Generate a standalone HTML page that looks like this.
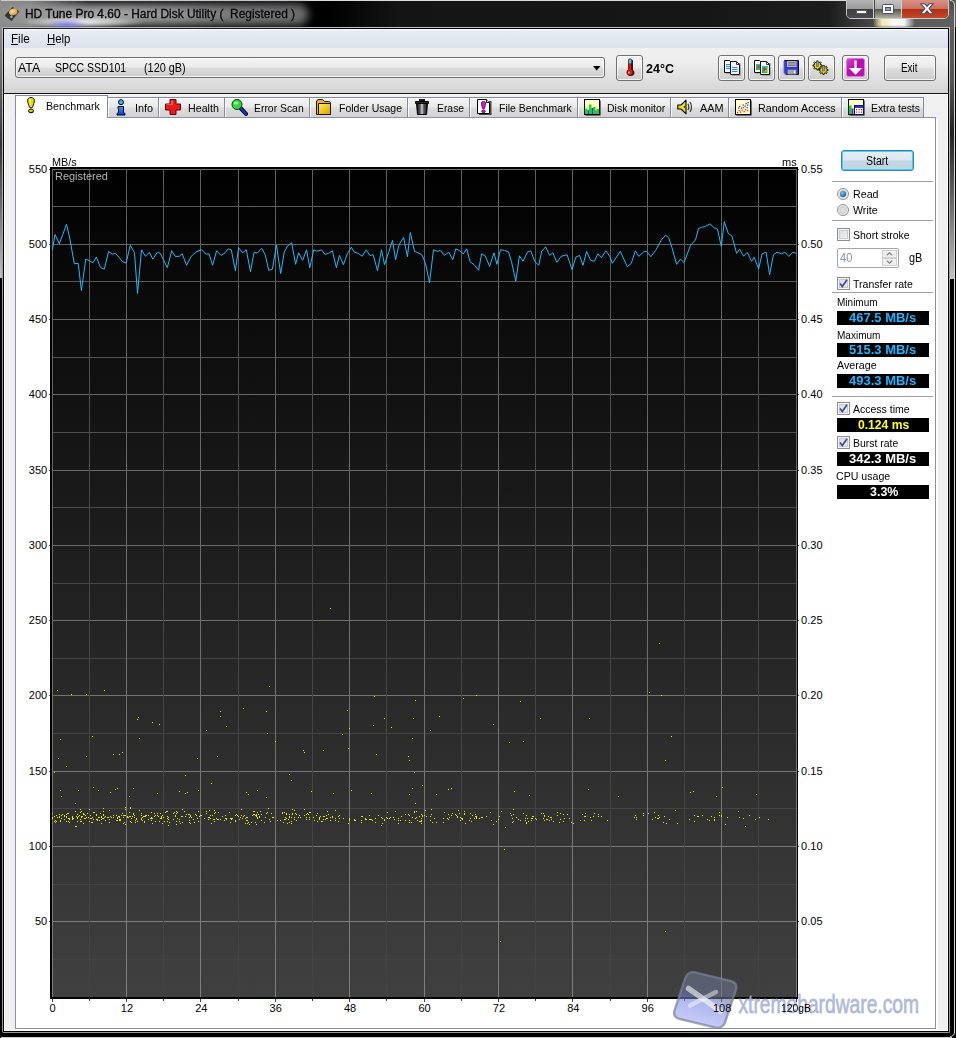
<!DOCTYPE html>
<html><head><meta charset="utf-8"><title>HD Tune Pro</title>
<style>

html,body{margin:0;padding:0}
body{width:956px;height:1038px;position:relative;overflow:hidden;background:#000;font-family:"Liberation Sans",sans-serif;font-size:11px;color:#000}
div,svg{position:absolute;box-sizing:border-box}
div{white-space:nowrap}
.ax{font-size:11px;line-height:14px;height:14px;z-index:6}
#client{left:4px;top:29px;width:946px;height:1002px;background:#f0f0f0}
#panel{left:15px;top:117px;width:921px;height:912px;background:#fff;border:1px solid #8c90a2;box-shadow:2px 2px 0 #fff}
.btn{border:1px solid #727272;border-radius:3px;background:linear-gradient(#f4f4f4 0,#ececec 46%,#dcdcdc 54%,#cdcdcd 100%);box-shadow:inset 0 0 0 1px rgba(255,255,255,.75)}
.tab{top:97px;height:20px;border:1px solid #858a9c;border-bottom:none;background:linear-gradient(#f3f3f3 0,#eaeaea 48%,#dddddd 52%,#d3d3d3 100%);box-shadow:inset 1px 1px 0 rgba(255,255,255,.85);font-size:11px;line-height:19px}
.tab span{position:absolute;top:0}
.tab svg{top:1px}
.sep{height:1px;background:#a0a0a0;left:832px;width:101px}
.lbl{font-size:11px;line-height:14px;height:14px}
.val{left:837px;width:92px;height:14px;background:#000;font-weight:bold;font-size:12px;line-height:14px;text-align:center;letter-spacing:.35px}
.cb{width:13px;height:13px;border:1px solid #8e8f8f;background:linear-gradient(135deg,#d8d8d8,#f6f6f6);box-shadow:inset 0 0 0 1px #f4f4f4, inset 0 0 0 2px #c8cbd0}
.rb{width:12px;height:12px;border:1px solid #8e8f8f;border-radius:50%;background:radial-gradient(circle at 50% 50%,#e8e8e8 0,#d0d0d0 45%,#f4f4f4 70%)}

</style></head>
<body>

<div style="left:0;top:0;width:956px;height:27px;background:linear-gradient(90deg,#000 0,#000 330px,#141414 400px,#161616 700px,#1c1c1c 830px,#464646 872px,#5c5c5c 915px,#5e5e5e 956px)"></div>
<div style="left:0;top:0;width:2px;height:278px;background:linear-gradient(#909090 0,#858a90 30px,#666 80px,#333 144px,#666 200px,#bbb 274px,#bbb 100%)"></div>
<div style="left:950px;top:0;width:4px;height:279px;background:linear-gradient(#4a4a4a 0,#606060 20px,#555 80px,#222 133px,#666 200px,#c0c0c0 277px,#c0c0c0 100%)"></div>
<div style="left:1px;top:0;width:846px;height:1px;background:#dcdcdc"></div>
<div style="left:1px;top:1037px;width:951px;height:1px;background:#d0d0d0"></div>
<div style="left:950px;top:10px;width:5px;height:1027px;border-right:1px solid #d4d4d4;border-bottom:1px solid #d0d0d0;border-radius:0 0 5px 0"></div>
<div style="left:950px;top:0px;width:5px;height:14px;border-right:1px solid #d4d4d4;border-top:1px solid #d0d0d0;border-radius:0 5px 0 0"></div>
<div style="left:2px;top:27px;width:948px;height:1006px;border:1px solid #9a9a9a;border-top-color:#c6c6c6;border-radius:2px"></div>
<div style="left:2px;top:27px;width:1px;height:300px;background:linear-gradient(#c6c6c6,#9a9a9a)"></div>
<div style="left:949px;top:27px;width:1px;height:300px;background:linear-gradient(#c6c6c6,#9a9a9a)"></div>
<div style="left:3px;top:28px;width:946px;height:1004px;background:#000"></div>
<div style="left:4px;top:29px;width:944px;height:1002px;background:#fff"></div>
<div id="client" style="left:5px;top:30px;width:942px;height:1000px"></div>


<div style="left:0;top:1px;width:90px;height:26px;background:linear-gradient(90deg,rgba(134,134,134,1) 0,rgba(140,140,140,.9) 30px,rgba(140,140,140,0) 90px)"></div>
<div style="left:-14px;top:4px;width:322px;height:21px;border-radius:9px;background:linear-gradient(90deg,#8c8c8c 0,#9c9c9c 60px,#a4a4a4 120px,#929292 190px,#7a7a7a 240px,#6c6c6c 100%);filter:blur(4.5px)"></div>
<div style="left:18px;top:15px;width:130px;height:13px;background:radial-gradient(ellipse 62px 6px at 50% 55%,rgba(255,255,255,.85) 0,rgba(255,255,255,.45) 55%,rgba(255,255,255,0) 100%)"></div>
<div style="left:44px;top:19px;width:46px;height:9px;background:radial-gradient(ellipse 22px 5px at 50% 60%,rgba(110,110,255,.75) 0,rgba(120,120,255,0) 100%)"></div>
<svg style="left:5px;top:6px" width="16" height="16" viewBox="0 0 16 16"><defs><radialGradient id="dg" cx=".45" cy=".4" r=".6"><stop offset="0" stop-color="#ffe0a0"/><stop offset=".5" stop-color="#f4b858"/><stop offset="1" stop-color="#d89838"/></radialGradient></defs><path d="M0 9 L7.500 1.100 L14.200 5.300 L6.700 14.500 Z" fill="#343434"/><path d="M0 9 L6.700 14.500 L6.700 15.300 L0 9.900Z" fill="#1c1c1c"/><path d="M6.700 14.500 L14.200 5.300 L14.200 6.100 L6.700 15.300Z" fill="#4a4a4a"/><ellipse cx="8.200" cy="5.900" rx="4.300" ry="3.300" fill="url(#dg)" transform="rotate(-20 8.200 5.900)"/><circle cx="8.200" cy="5.900" r="1.100" fill="#d4d4e4"/><rect x="5.200" y="9.800" width="2.300" height="2.200" fill="#a8a2a2" transform="rotate(-40 6.300 10.900)"/></svg>
<!-- window controls -->
<div style="left:846px;top:-1px;width:103px;height:20px;border:1px solid #c8c8c8;border-radius:0 0 5px 5px;overflow:hidden;background:#444">
  <div style="left:0;top:0;width:27px;height:18px;background:linear-gradient(#b4b4b4 0,#9a9a9a 48%,#3e3e42 52%,#4a4a50 100%);border-right:1px solid #d0d0d0"></div>
  <div style="left:28px;top:0;width:27px;height:18px;background:linear-gradient(#c4c4c4 0,#a8a8a8 48%,#55554c 52%,#b0b09c 100%);border-right:1px solid #d0d0d0"></div>
  <div style="left:55px;top:0;width:48px;height:18px;background:linear-gradient(#d99086 0,#c87262 48%,#b42c12 52%,#c24a2a 100%)"></div>
  <div style="left:9px;top:10px;width:11px;height:4px;background:#fff;border:1px solid #555a66;border-radius:1px"></div>
  <svg style="left:35px;top:4px" width="13" height="11" viewBox="0 0 13 11"><rect x=".5" y=".5" width="11" height="9" rx="1" fill="#fff" stroke="#4a5068"/><rect x="3.5" y="3.5" width="5" height="3" fill="#a8a690" stroke="#4a5068"/></svg>
  <svg style="left:73px;top:3px" width="14" height="12" viewBox="0 0 14 12"><path d="M1 .8 L4.800 .8 L7 3.400 L9.200 .8 L13 .8 L9.100 5.500 L13.200 10.700 L9.300 10.700 L7 7.800 L4.700 10.700 L.8 10.700 L4.900 5.500 Z" fill="#fff" stroke="#4a4f62" stroke-width="1.100"/></svg>
</div>
<div style="left:873px;top:19px;width:42px;height:8px;background:linear-gradient(90deg,rgba(240,232,176,0) 0,rgba(240,232,176,.55) 4px,rgba(242,234,180,1) 9px,rgba(246,242,210,1) 16px,rgba(250,250,250,1) 21px,rgba(248,248,248,1) 31px,rgba(240,240,240,.5) 37px,rgba(240,240,240,0) 42px)"></div>
<div style="left:873px;top:25px;width:42px;height:2px;background:linear-gradient(rgba(40,40,40,0),rgba(40,40,40,.35))"></div>


<div style="left:4px;top:29px;width:944px;height:19px;background:linear-gradient(#fff 0,#e6ebf4 2px,#dde3ee 100%)"></div>
<div style="left:10.500px;top:31px;font-size:12px;line-height:16px;transform-origin:0 0;transform:scaleX(.97)"><u>F</u>ile</div>
<div style="left:46.500px;top:31px;font-size:12px;line-height:16px;transform-origin:0 0;transform:scaleX(.95)"><u>H</u>elp</div>


<div style="left:4px;top:48px;width:944px;height:45px;background:linear-gradient(#f0f0f0 0,#eeeeee 30%,#dedede 75%,#d4d4d4 100%)"></div>
<div style="left:4px;top:93px;width:944px;height:1px;background:#111"></div>
<div style="left:4px;top:94px;width:944px;height:1px;background:#fafafa"></div>
<div class="btn" style="left:15px;top:57px;width:590px;height:21px;border-color:#707070"></div>
<svg style="left:593px;top:66px" width="8" height="5" viewBox="0 0 8 5"><path d="M0 0H7.500L3.750 4.500Z" fill="#000"/></svg>
<div class="btn" style="left:616px;top:55px;width:27px;height:26px"></div>
<svg style="left:623px;top:58px" width="14" height="20" viewBox="0 0 14 20"><path d="M6.500 2.500 C6.500 1 10 1 10 2.500 V12 C12.500 13.500 12 18 8 18 C4.500 18 4 13.500 6.500 12Z" fill="#000" opacity=".85"/><path d="M5.500 2 C5.500 .6 8.500 .6 8.500 2 V11.500 C11 13 10.500 17.500 7 17.500 C3.500 17.500 3 13 5.500 11.500Z" fill="#e81010" stroke="#500000" stroke-width=".8"/><rect x="5.800" y="1.500" width="2.600" height="3.800" fill="#38d8e8"/><circle cx="6" cy="14.500" r="1" fill="#ffb0b0"/></svg>
<div class="btn" style="left:718px;top:55px;width:27px;height:26px"></div>
<div class="btn" style="left:748px;top:55px;width:27px;height:26px"></div>
<div class="btn" style="left:778px;top:55px;width:27px;height:26px"></div>
<div class="btn" style="left:808px;top:55px;width:27px;height:26px"></div>
<div class="btn" style="left:842px;top:55px;width:27px;height:26px"></div>
<div class="btn" style="left:884px;top:55px;width:52px;height:26px"></div>
<svg style="left:724px;top:60px" width="17" height="16" viewBox="0 0 17 16"><rect x="1.5" y="1.5" width="7" height="12" fill="#303030" opacity=".5"/><path d="M.5 .5H5.500L7.500 2.500V12.500H.5Z" fill="#fff" stroke="#101010"/><path d="M2 4.500h4M2 6.500h4M2 8.500h4" stroke="#1a8cff" stroke-width="1.100"/><rect x="8" y="3" width="8.500" height="12.500" fill="#303030" opacity=".55"/><path d="M6.500 1.500H12.500L15.500 4.500V14.500H6.500Z" fill="#f4f4f4" stroke="#101010"/><path d="M12.500 1.500V4.500H15.500" fill="none" stroke="#101010" stroke-width=".8"/><path d="M8 7.500h5.500M8 9.500h5.500M8 11.500h5.500" stroke="#1a8cff" stroke-width="1.200"/></svg>
<svg style="left:754px;top:60px" width="17" height="16" viewBox="0 0 17 16"><rect x="1.5" y="1.5" width="7" height="12" fill="#303030" opacity=".5"/><path d="M.5 .5H5.500L7.500 2.500V12.500H.5Z" fill="#fff" stroke="#101010"/><rect x="2" y="4" width="4.500" height="6" fill="#28c048"/><rect x="2" y="4" width="4.500" height="1.200" fill="#30b0e8"/><rect x="3.500" y="5.500" width="2" height="2.500" fill="#e03020"/><rect x="8" y="3" width="8.500" height="12.500" fill="#303030" opacity=".55"/><path d="M6.500 1.500H12.500L15.500 4.500V14.500H6.500Z" fill="#f4f4f4" stroke="#101010"/><path d="M12.500 1.500V4.500H15.500" fill="none" stroke="#101010" stroke-width=".8"/><rect x="8" y="6" width="5.500" height="7" fill="#28c048"/><rect x="8" y="6" width="5.500" height="1.300" fill="#30b0e8"/><rect x="9.500" y="8" width="2.500" height="3" fill="#e03020"/><rect x="11" y="10" width="1.500" height="1.500" fill="#e8d020"/></svg>
<svg style="left:783px;top:60px" width="17" height="16" viewBox="0 0 17 16"><path d="M1.500 .5H15.500V14.500H3L1.500 13Z" fill="#3434d8" stroke="#0a0a30"/><path d="M1 1V13L3 15" fill="none" stroke="#8080f0" stroke-width="1.200"/><rect x="4" y="1" width="9.500" height="6" fill="#b8b8b8"/><path d="M5 2.500h7.500M5 4h7.500M5 5.500h7.500" stroke="#787878" stroke-width=".9"/><rect x="4.500" y="9.500" width="9" height="5" fill="#8c8c8c"/><rect x="10.500" y="10.500" width="2" height="3" fill="#e8e8e8"/><rect x="5" y="10" width="4.500" height="4" fill="#a8a8a8"/></svg>
<svg style="left:812px;top:59px" width="18" height="17" viewBox="0 0 18 17"><path d="M10.06 5.90 L10.06 7.10 L8.52 7.31 L8.21 8.06 L9.15 9.30 L8.30 10.15 L7.06 9.21 L6.31 9.52 L6.10 11.06 L4.90 11.06 L4.69 9.52 L3.94 9.21 L2.70 10.15 L1.85 9.30 L2.79 8.06 L2.48 7.31 L0.94 7.10 L0.94 5.90 L2.48 5.69 L2.79 4.94 L1.85 3.70 L2.70 2.85 L3.94 3.79 L4.69 3.48 L4.90 1.94 L6.10 1.94 L6.31 3.48 L7.06 3.79 L8.30 2.85 L9.15 3.70 L8.21 4.94 L8.52 5.69Z" fill="#e8e010" stroke="#1a1a00" stroke-width="1" stroke-linejoin="round"/><rect x="4.3" y="2.0" width="2.4" height="5.5" fill="#9a9aa0" stroke="#404048" stroke-width=".5"/><path d="M16.06 10.40 L16.06 11.60 L14.52 11.81 L14.21 12.56 L15.15 13.80 L14.30 14.65 L13.06 13.71 L12.31 14.02 L12.10 15.56 L10.90 15.56 L10.69 14.02 L9.94 13.71 L8.70 14.65 L7.85 13.80 L8.79 12.56 L8.48 11.81 L6.94 11.60 L6.94 10.40 L8.48 10.19 L8.79 9.44 L7.85 8.20 L8.70 7.35 L9.94 8.29 L10.69 7.98 L10.90 6.44 L12.10 6.44 L12.31 7.98 L13.06 8.29 L14.30 7.35 L15.15 8.20 L14.21 9.44 L14.52 10.19Z" fill="#e8e010" stroke="#1a1a00" stroke-width="1" stroke-linejoin="round"/><rect x="10.3" y="6.5" width="2.4" height="5.5" fill="#9a9aa0" stroke="#404048" stroke-width=".5"/></svg>
<svg style="left:846px;top:58px" width="19" height="19" viewBox="0 0 19 19"><defs><linearGradient id="mg" x1="0" y1="0" x2="1" y2="1"><stop offset="0" stop-color="#d848d0"/><stop offset=".45" stop-color="#b80cb0"/><stop offset="1" stop-color="#c010b8"/></linearGradient></defs><rect x=".5" y=".5" width="18" height="18" rx="2" fill="url(#mg)" stroke="#e078dc" stroke-width="1"/><path d="M9.500 2.500V12" stroke="#fff" stroke-width="2.300"/><path d="M2.800 10H16.200L9.500 16.800Z" fill="#fff"/></svg>

<div class="tab" style="left:107px;width:52px"><svg style="left:5px;top:1px" width="17" height="17" viewBox="0 0 17 17"><defs><linearGradient id="ig" x1="0" y1="0" x2="0" y2="1"><stop offset="0" stop-color="#28a8ff"/><stop offset="1" stop-color="#0038f0"/></linearGradient></defs><circle cx="8" cy="3.200" r="2.500" fill="#20c0ff" stroke="#000" stroke-width="1"/><path d="M5 7.500h5.500v6l1.500 1v1.500H4V14.500l1.500 -1V9.500H5z" fill="url(#ig)" stroke="#000" stroke-width="1"/></svg></div>
<div class="tab" style="left:158px;width:67px"><svg style="left:6px;top:1px" width="17" height="17" viewBox="0 0 17 17"><path d="M5 .5h6V5h4.500v6H11v4.500H5V11H.5V5H5z" fill="#e81c1c" stroke="#6a0000" stroke-width="1"/><path d="M6 1.500h2v4.500H1.500v-1H6z" fill="#ff7070" opacity=".7"/></svg></div>
<div class="tab" style="left:224px;width:86px"><svg style="left:6px;top:1px" width="17" height="17" viewBox="0 0 17 17"><path d="M9.500 9 L15 14.800" stroke="#000" stroke-width="4" stroke-linecap="round"/><path d="M9.500 9 L14.800 14.600" stroke="#1c30c0" stroke-width="2.400" stroke-linecap="round"/><circle cx="6" cy="5.500" r="5" fill="#30d840" stroke="#0a3a0a" stroke-width="1"/><ellipse cx="5" cy="4" rx="2.400" ry="1.500" fill="#b0ffb0" opacity=".85"/></svg></div>
<div class="tab" style="left:309px;width:99px"><svg style="left:6px;top:1px" width="17" height="17" viewBox="0 0 17 17"><defs><linearGradient id="fg" x1="0" y1="0" x2="1" y2="1"><stop offset="0" stop-color="#fff080"/><stop offset=".5" stop-color="#f0c820"/><stop offset="1" stop-color="#d8a000"/></linearGradient></defs><path d="M.5 3 C.5 1.500 1.500 .5 3 .5 H6.500 L8.500 2.500 H12.500 C14 2.500 14.500 3.500 14.500 4.500 V15.500 H.5Z" fill="#e8b818" stroke="#1a1200" stroke-width="1"/><path d="M2.500 4.500 H14.500 V15.500 H2.500Z" fill="url(#fg)" stroke="#1a1200" stroke-width="1"/></svg></div>
<div class="tab" style="left:407px;width:63px"><svg style="left:6px;top:1px" width="17" height="17" viewBox="0 0 17 17"><defs><linearGradient id="eg" x1="0" y1="0" x2="1" y2="0"><stop offset="0" stop-color="#101010"/><stop offset=".3" stop-color="#505050"/><stop offset=".5" stop-color="#d0d0d0"/><stop offset=".65" stop-color="#606060"/><stop offset="1" stop-color="#080808"/></linearGradient></defs><path d="M2.500 4.500 H13.500 L12.500 15.500 H3.500Z" fill="url(#eg)" stroke="#000" stroke-width="1"/><path d="M1.500 2.500 H14.500 V4.500 H1.500Z" fill="#282828" stroke="#000" stroke-width="1"/><rect x="5.500" y=".5" width="5" height="2" fill="#181818" stroke="#000" stroke-width=".8"/></svg></div>
<div class="tab" style="left:469px;width:109px"><svg style="left:6px;top:1px" width="17" height="17" viewBox="0 0 17 17"><path d="M3 2H15.500V16H3Z" fill="#202020" opacity=".8"/><path d="M1.500 .5 H10.500 L13.500 3.500 V14.500 H1.500Z" fill="#fff" stroke="#000" stroke-width="1"/><path d="M10.500 .5V3.500H13.500" fill="#e0e0e0" stroke="#000" stroke-width=".9"/><path d="M5.400 4 C5.400 2 9.600 2 9.600 4 L8.700 9.200 C8.600 10 6.400 10 6.300 9.200Z" fill="#e010e0" stroke="#400040" stroke-width=".8"/><ellipse cx="7.500" cy="12.300" rx="1.700" ry="1.400" fill="#e010e0" stroke="#400040" stroke-width=".8"/></svg></div>
<div class="tab" style="left:577px;width:94px"><svg style="left:6px;top:1px" width="17" height="17" viewBox="0 0 17 17"><rect x="1.500" y="1.500" width="15" height="15" fill="#000"/><rect x=".5" y=".5" width="15" height="15" fill="#ffffc8" stroke="#000" stroke-width="1"/><path d="M1 15V9.500h2.500V15z M5 15V5.500h2.500V15z M9 15V8h2.500V15z M12.500 15V10h2.500V15z" fill="#10e010"/><path d="M3.500 15V11h1.500v4z M7.500 15V9h1.500v6z M11.500 15V11.500h1v3.500z" fill="#2838f0"/></svg></div>
<div class="tab" style="left:670px;width:59px"><svg style="left:6px;top:1px" width="17" height="17" viewBox="0 0 17 17"><path d="M.8 6 H4 L9 1.200 V14.800 L4 10 H.8Z" fill="#e8e010" stroke="#000" stroke-width="1.100" stroke-linejoin="round"/><path d="M5 6.500V9.500" stroke="#fffca0" stroke-width="1"/><circle cx="7.500" cy="8" r=".9" fill="#303000"/><path d="M11 5 Q12.800 8 11 11 M13 3 Q16 8 13 13" fill="none" stroke="#383838" stroke-width="1.200"/></svg></div>
<div class="tab" style="left:728px;width:114px"><svg style="left:6px;top:1px" width="17" height="17" viewBox="0 0 17 17"><rect x="1.500" y="1.500" width="15" height="15" fill="#000"/><rect x=".5" y=".5" width="15" height="15" fill="#ffffc8" stroke="#000" stroke-width="1"/><path d="M2 13h1.300v1.300h-1.300z M3.500 11h1.300v1.300h-1.300z M5 12.500h1.300v1.300h-1.300z M6.500 10.500h1.300v1.300h-1.300z M8.500 12h1.300v1.300h-1.300z M10 10h1.300v1.300h-1.300z M12 11h1.300v1.300h-1.300z M3 8.500h1.300v1.300h-1.300z M8 8h1.300v1.300h-1.300z" fill="#f02020"/><path d="M4 7h1.300v1.300h-1.300z M6 8.500h1.300v1.300h-1.300z M7.500 5.500h1.300v1.300h-1.300z M9.500 6.500h1.300v1.300h-1.300z M10.500 4h1.300v1.300h-1.300z M12 5.500h1.300v1.300h-1.300z M12.500 3h1.300v1.300h-1.300z M11.500 8h1.300v1.300h-1.300z" fill="#2030f0"/></svg></div>
<div class="tab" style="left:841px;width:83px"><svg style="left:6px;top:1px" width="17" height="17" viewBox="0 0 17 17"><rect x="1.500" y="1.500" width="15" height="15" fill="#000"/><rect x=".5" y=".5" width="15" height="15" fill="#ffffc8" stroke="#000" stroke-width="1"/><path d="M1 15V6.500h2.500V15z" fill="#10d010"/><path d="M3.500 15V9.500h2V15z" fill="#2838f0"/><rect x="6.500" y="6.500" width="9" height="9" fill="#fff" stroke="#101060" stroke-width="1"/><rect x="7" y="7" width="8" height="2" fill="#2838d0"/><path d="M8 10h1.200v1.200h-1.200z M10.500 10h1.200v1.200h-1.200z M8 12.500h1.200v1.200h-1.200z M13 12.500h1.200v1.200h-1.200z M10.500 12.500h1.200v1.200h-1.200z" fill="#f02020"/><path d="M13 10h1.200v1.200h-1.200z" fill="#2030f0"/></svg></div>
<div class="tab" style="left:15px;width:93px;top:95px;height:23px;background:#fff;z-index:3;line-height:21px;box-shadow:none"><svg style="left:7px;top:1px" width="17" height="17" viewBox="0 0 17 17"><path d="M4.600 3.200 C4.600 -.4 11.400 -.4 11.400 3.200 C11.400 5.500 10.200 8 9.700 10 C9.400 11.200 6.600 11.200 6.300 10 C5.800 8 4.600 5.500 4.600 3.200Z" fill="#e2dc00" stroke="#141400" stroke-width="1"/><path d="M6.200 2.500 C6.400 1.200 8 1.200 8 2.500 L7.600 8 L7 8Z" fill="#fdfa80"/><ellipse cx="8" cy="13.800" rx="2.500" ry="1.700" fill="#e2dc00" stroke="#141400" stroke-width="1"/><path d="M5.800 15.200 Q8 16.600 10.400 15.200" fill="none" stroke="#000" stroke-width="1" opacity=".7"/></svg></div>
<div id="panel"></div>
<svg id="chart" style="position:absolute;left:0;top:0" width="956" height="1038" viewBox="0 0 956 1038" shape-rendering="crispEdges">
<defs><linearGradient id="bg" x1="0" y1="0" x2="0" y2="1"><stop offset="0" stop-color="#000"/><stop offset="0.06" stop-color="#040404"/><stop offset="1" stop-color="#404040"/></linearGradient><linearGradient id="mj" gradientUnits="userSpaceOnUse" x1="0" y1="169" x2="0" y2="997"><stop offset="0" stop-color="#5f5f5f"/><stop offset="0.5" stop-color="#6c6c6c"/><stop offset="1" stop-color="#808080"/></linearGradient><linearGradient id="mn" gradientUnits="userSpaceOnUse" x1="0" y1="169" x2="0" y2="997"><stop offset="0" stop-color="#5f5f5f"/><stop offset="0.25" stop-color="#505050"/><stop offset="0.5" stop-color="#464646"/><stop offset="1" stop-color="#424242"/></linearGradient></defs>
<rect x="50" y="167" width="748" height="832" fill="#000"/>
<rect x="52" y="169" width="745" height="828" fill="url(#bg)"/>
<rect x="52" y="169" width="745" height="1" fill="#707070"/>
<rect x="52" y="206" width="745" height="1" fill="#5c5c5c"/>
<rect x="52" y="244" width="745" height="1" fill="#616161"/>
<rect x="52" y="281" width="745" height="1" fill="#585858"/>
<rect x="52" y="319" width="745" height="1" fill="#646464"/>
<rect x="52" y="357" width="745" height="1" fill="#535353"/>
<rect x="52" y="394" width="745" height="1" fill="#676767"/>
<rect x="52" y="432" width="745" height="1" fill="#4f4f4f"/>
<rect x="52" y="470" width="745" height="1" fill="#6a6a6a"/>
<rect x="52" y="507" width="745" height="1" fill="#4a4a4a"/>
<rect x="52" y="545" width="745" height="1" fill="#6d6d6d"/>
<rect x="52" y="583" width="745" height="1" fill="#464646"/>
<rect x="52" y="620" width="745" height="1" fill="#707070"/>
<rect x="52" y="658" width="745" height="1" fill="#454545"/>
<rect x="52" y="695" width="745" height="1" fill="#737373"/>
<rect x="52" y="733" width="745" height="1" fill="#444444"/>
<rect x="52" y="771" width="745" height="1" fill="#767676"/>
<rect x="52" y="808" width="745" height="1" fill="#434343"/>
<rect x="52" y="846" width="745" height="1" fill="#797979"/>
<rect x="52" y="884" width="745" height="1" fill="#434343"/>
<rect x="52" y="921" width="745" height="1" fill="#7c7c7c"/>
<rect x="52" y="959" width="745" height="1" fill="#424242"/>
<rect x="52" y="169" width="1" height="828" fill="url(#mj)"/>
<rect x="89" y="169" width="1" height="828" fill="url(#mn)"/>
<rect x="126" y="169" width="1" height="828" fill="url(#mj)"/>
<rect x="163" y="169" width="1" height="828" fill="url(#mn)"/>
<rect x="200" y="169" width="1" height="828" fill="url(#mj)"/>
<rect x="238" y="169" width="1" height="828" fill="url(#mn)"/>
<rect x="275" y="169" width="1" height="828" fill="url(#mj)"/>
<rect x="312" y="169" width="1" height="828" fill="url(#mn)"/>
<rect x="349" y="169" width="1" height="828" fill="url(#mj)"/>
<rect x="386" y="169" width="1" height="828" fill="url(#mn)"/>
<rect x="424" y="169" width="1" height="828" fill="url(#mj)"/>
<rect x="461" y="169" width="1" height="828" fill="url(#mn)"/>
<rect x="498" y="169" width="1" height="828" fill="url(#mj)"/>
<rect x="535" y="169" width="1" height="828" fill="url(#mn)"/>
<rect x="572" y="169" width="1" height="828" fill="url(#mj)"/>
<rect x="610" y="169" width="1" height="828" fill="url(#mn)"/>
<rect x="647" y="169" width="1" height="828" fill="url(#mj)"/>
<rect x="684" y="169" width="1" height="828" fill="url(#mn)"/>
<rect x="721" y="169" width="1" height="828" fill="url(#mj)"/>
<rect x="758" y="169" width="1" height="828" fill="url(#mn)"/>
<rect x="796" y="169" width="1" height="828" fill="url(#mj)"/>
<rect x="49" y="169" width="1" height="1" fill="#555"/>
<rect x="798" y="169" width="1" height="1" fill="#555"/>
<rect x="49" y="244" width="1" height="1" fill="#555"/>
<rect x="798" y="244" width="1" height="1" fill="#555"/>
<rect x="49" y="319" width="1" height="1" fill="#555"/>
<rect x="798" y="319" width="1" height="1" fill="#555"/>
<rect x="49" y="394" width="1" height="1" fill="#555"/>
<rect x="798" y="394" width="1" height="1" fill="#555"/>
<rect x="49" y="470" width="1" height="1" fill="#555"/>
<rect x="798" y="470" width="1" height="1" fill="#555"/>
<rect x="49" y="545" width="1" height="1" fill="#555"/>
<rect x="798" y="545" width="1" height="1" fill="#555"/>
<rect x="49" y="620" width="1" height="1" fill="#555"/>
<rect x="798" y="620" width="1" height="1" fill="#555"/>
<rect x="49" y="695" width="1" height="1" fill="#555"/>
<rect x="798" y="695" width="1" height="1" fill="#555"/>
<rect x="49" y="771" width="1" height="1" fill="#555"/>
<rect x="798" y="771" width="1" height="1" fill="#555"/>
<rect x="49" y="846" width="1" height="1" fill="#555"/>
<rect x="798" y="846" width="1" height="1" fill="#555"/>
<rect x="49" y="921" width="1" height="1" fill="#555"/>
<rect x="798" y="921" width="1" height="1" fill="#555"/>
<rect x="52" y="999" width="1" height="3" fill="#444"/>
<rect x="89" y="999" width="1" height="2" fill="#444"/>
<rect x="126" y="999" width="1" height="3" fill="#444"/>
<rect x="163" y="999" width="1" height="2" fill="#444"/>
<rect x="200" y="999" width="1" height="3" fill="#444"/>
<rect x="238" y="999" width="1" height="2" fill="#444"/>
<rect x="275" y="999" width="1" height="3" fill="#444"/>
<rect x="312" y="999" width="1" height="2" fill="#444"/>
<rect x="349" y="999" width="1" height="3" fill="#444"/>
<rect x="386" y="999" width="1" height="2" fill="#444"/>
<rect x="424" y="999" width="1" height="3" fill="#444"/>
<rect x="461" y="999" width="1" height="2" fill="#444"/>
<rect x="498" y="999" width="1" height="3" fill="#444"/>
<rect x="535" y="999" width="1" height="2" fill="#444"/>
<rect x="572" y="999" width="1" height="3" fill="#444"/>
<rect x="610" y="999" width="1" height="2" fill="#444"/>
<rect x="647" y="999" width="1" height="3" fill="#444"/>
<rect x="684" y="999" width="1" height="2" fill="#444"/>
<rect x="721" y="999" width="1" height="3" fill="#444"/>
<rect x="758" y="999" width="1" height="2" fill="#444"/>
<rect x="796" y="999" width="1" height="3" fill="#444"/>
<path d="M116 820h1v1h-1zM66 821h1v1h-1zM158 816h1v1h-1zM152 818h1v1h-1zM59 816h1v1h-1zM69 818h1v1h-1zM136 818h1v1h-1zM96 815h1v1h-1zM176 821h1v1h-1zM130 816h1v1h-1zM245 823h1v1h-1zM109 819h1v1h-1zM80 819h1v1h-1zM213 819h1v1h-1zM87 813h1v1h-1zM125 815h1v1h-1zM160 818h1v1h-1zM92 817h1v1h-1zM186 814h1v1h-1zM167 818h1v1h-1zM141 815h1v1h-1zM190 823h1v1h-1zM100 813h1v1h-1zM225 815h1v1h-1zM196 815h1v1h-1zM75 826h1v1h-1zM134 817h1v1h-1zM148 815h1v1h-1zM59 814h1v1h-1zM165 812h1v1h-1zM225 815h1v1h-1zM169 822h1v1h-1zM166 811h1v1h-1zM239 819h1v1h-1zM145 816h1v1h-1zM190 816h1v1h-1zM180 823h1v1h-1zM108 817h1v1h-1zM128 817h1v1h-1zM143 816h1v1h-1zM85 818h1v1h-1zM204 818h1v1h-1zM77 817h1v1h-1zM224 820h1v1h-1zM67 813h1v1h-1zM226 818h1v1h-1zM214 819h1v1h-1zM134 815h1v1h-1zM123 823h1v1h-1zM81 811h1v1h-1zM86 817h1v1h-1zM148 819h1v1h-1zM168 817h1v1h-1zM134 817h1v1h-1zM125 809h1v1h-1zM188 814h1v1h-1zM154 813h1v1h-1zM62 814h1v1h-1zM230 818h1v1h-1zM209 810h1v1h-1zM129 816h1v1h-1zM177 818h1v1h-1zM64 819h1v1h-1zM84 818h1v1h-1zM119 817h1v1h-1zM81 817h1v1h-1zM72 816h1v1h-1zM225 818h1v1h-1zM173 819h1v1h-1zM120 819h1v1h-1zM124 822h1v1h-1zM248 822h1v1h-1zM144 816h1v1h-1zM72 817h1v1h-1zM119 816h1v1h-1zM83 823h1v1h-1zM56 821h1v1h-1zM81 816h1v1h-1zM159 821h1v1h-1zM245 818h1v1h-1zM222 816h1v1h-1zM124 815h1v1h-1zM85 818h1v1h-1zM206 813h1v1h-1zM117 818h1v1h-1zM247 823h1v1h-1zM220 819h1v1h-1zM198 811h1v1h-1zM96 814h1v1h-1zM57 817h1v1h-1zM57 817h1v1h-1zM189 820h1v1h-1zM241 809h1v1h-1zM247 820h1v1h-1zM241 815h1v1h-1zM96 819h1v1h-1zM90 818h1v1h-1zM230 822h1v1h-1zM218 812h1v1h-1zM210 818h1v1h-1zM68 813h1v1h-1zM206 811h1v1h-1zM200 815h1v1h-1zM208 817h1v1h-1zM117 820h1v1h-1zM130 808h1v1h-1zM131 822h1v1h-1zM85 815h1v1h-1zM77 821h1v1h-1zM211 823h1v1h-1zM80 821h1v1h-1zM182 809h1v1h-1zM121 815h1v1h-1zM54 816h1v1h-1zM244 815h1v1h-1zM236 814h1v1h-1zM137 821h1v1h-1zM93 812h1v1h-1zM101 816h1v1h-1zM168 819h1v1h-1zM103 815h1v1h-1zM232 818h1v1h-1zM122 813h1v1h-1zM231 818h1v1h-1zM135 820h1v1h-1zM157 815h1v1h-1zM155 821h1v1h-1zM88 817h1v1h-1zM52 818h1v1h-1zM145 815h1v1h-1zM195 814h1v1h-1zM154 816h1v1h-1zM161 817h1v1h-1zM162 815h1v1h-1zM101 816h1v1h-1zM152 823h1v1h-1zM163 817h1v1h-1zM139 810h1v1h-1zM173 813h1v1h-1zM189 817h1v1h-1zM141 813h1v1h-1zM238 816h1v1h-1zM190 823h1v1h-1zM103 811h1v1h-1zM162 823h1v1h-1zM79 815h1v1h-1zM76 816h1v1h-1zM99 817h1v1h-1zM66 814h1v1h-1zM229 812h1v1h-1zM82 816h1v1h-1zM80 812h1v1h-1zM226 819h1v1h-1zM240 817h1v1h-1zM130 807h1v1h-1zM216 818h1v1h-1zM83 813h1v1h-1zM119 819h1v1h-1zM90 815h1v1h-1zM55 822h1v1h-1zM161 816h1v1h-1zM117 817h1v1h-1zM175 816h1v1h-1zM247 817h1v1h-1zM208 819h1v1h-1zM104 817h1v1h-1zM59 817h1v1h-1zM77 814h1v1h-1zM135 822h1v1h-1zM103 814h1v1h-1zM81 821h1v1h-1zM190 815h1v1h-1zM69 822h1v1h-1zM136 819h1v1h-1zM66 821h1v1h-1zM210 815h1v1h-1zM68 818h1v1h-1zM222 816h1v1h-1zM141 815h1v1h-1zM235 821h1v1h-1zM105 820h1v1h-1zM99 820h1v1h-1zM73 818h1v1h-1zM91 818h1v1h-1zM113 815h1v1h-1zM109 822h1v1h-1zM151 818h1v1h-1zM55 820h1v1h-1zM101 823h1v1h-1zM161 818h1v1h-1zM89 809h1v1h-1zM73 818h1v1h-1zM214 813h1v1h-1zM217 819h1v1h-1zM129 812h1v1h-1zM246 817h1v1h-1zM119 820h1v1h-1zM177 812h1v1h-1zM132 816h1v1h-1zM77 818h1v1h-1zM66 817h1v1h-1zM84 814h1v1h-1zM68 821h1v1h-1zM184 811h1v1h-1zM107 817h1v1h-1zM142 820h1v1h-1zM83 814h1v1h-1zM242 818h1v1h-1zM244 815h1v1h-1zM243 816h1v1h-1zM113 817h1v1h-1zM127 817h1v1h-1zM145 815h1v1h-1zM151 817h1v1h-1zM52 817h1v1h-1zM131 818h1v1h-1zM60 820h1v1h-1zM98 817h1v1h-1zM167 811h1v1h-1zM182 816h1v1h-1zM193 819h1v1h-1zM116 815h1v1h-1zM246 820h1v1h-1zM179 821h1v1h-1zM60 821h1v1h-1zM176 811h1v1h-1zM197 818h1v1h-1zM155 815h1v1h-1zM151 820h1v1h-1zM215 812h1v1h-1zM167 821h1v1h-1zM189 814h1v1h-1zM97 819h1v1h-1zM123 817h1v1h-1zM72 819h1v1h-1zM176 813h1v1h-1zM175 815h1v1h-1zM52 813h1v1h-1zM209 817h1v1h-1zM157 813h1v1h-1zM182 822h1v1h-1zM101 819h1v1h-1zM66 816h1v1h-1zM92 822h1v1h-1zM198 821h1v1h-1zM127 816h1v1h-1zM146 815h1v1h-1zM174 812h1v1h-1zM179 819h1v1h-1zM102 818h1v1h-1zM199 816h1v1h-1zM54 821h1v1h-1zM64 816h1v1h-1zM189 822h1v1h-1zM185 816h1v1h-1zM144 821h1v1h-1zM144 822h1v1h-1zM91 822h1v1h-1zM245 818h1v1h-1zM142 817h1v1h-1zM214 821h1v1h-1zM105 816h1v1h-1zM93 819h1v1h-1zM167 816h1v1h-1zM80 809h1v1h-1zM78 816h1v1h-1zM214 810h1v1h-1zM191 817h1v1h-1zM97 820h1v1h-1zM56 815h1v1h-1zM52 813h1v1h-1zM111 817h1v1h-1zM79 815h1v1h-1zM218 819h1v1h-1zM52 817h1v1h-1zM75 811h1v1h-1zM235 815h1v1h-1zM109 810h1v1h-1zM125 807h1v1h-1zM168 825h1v1h-1zM123 815h1v1h-1zM61 818h1v1h-1zM72 818h1v1h-1zM237 815h1v1h-1zM101 817h1v1h-1zM89 821h1v1h-1zM125 824h1v1h-1zM212 815h1v1h-1zM176 824h1v1h-1zM160 813h1v1h-1zM194 822h1v1h-1zM141 819h1v1h-1zM201 815h1v1h-1zM61 815h1v1h-1zM235 820h1v1h-1zM120 820h1v1h-1zM110 816h1v1h-1zM103 808h1v1h-1zM181 816h1v1h-1zM130 821h1v1h-1zM85 818h1v1h-1zM231 819h1v1h-1zM150 818h1v1h-1zM249 824h1v1h-1zM141 818h1v1h-1zM69 819h1v1h-1zM119 819h1v1h-1zM103 818h1v1h-1zM164 821h1v1h-1zM133 813h1v1h-1zM133 814h1v1h-1zM118 816h1v1h-1zM64 815h1v1h-1zM76 826h1v1h-1zM151 812h1v1h-1zM94 812h1v1h-1zM298 817h1v1h-1zM330 820h1v1h-1zM421 821h1v1h-1zM253 811h1v1h-1zM255 815h1v1h-1zM335 810h1v1h-1zM355 820h1v1h-1zM416 817h1v1h-1zM398 823h1v1h-1zM294 810h1v1h-1zM269 819h1v1h-1zM372 820h1v1h-1zM419 816h1v1h-1zM387 812h1v1h-1zM332 816h1v1h-1zM390 817h1v1h-1zM291 821h1v1h-1zM304 815h1v1h-1zM273 817h1v1h-1zM375 822h1v1h-1zM270 821h1v1h-1zM354 819h1v1h-1zM319 818h1v1h-1zM251 822h1v1h-1zM304 809h1v1h-1zM366 819h1v1h-1zM409 815h1v1h-1zM294 817h1v1h-1zM422 816h1v1h-1zM253 814h1v1h-1zM339 815h1v1h-1zM296 814h1v1h-1zM370 819h1v1h-1zM256 816h1v1h-1zM310 812h1v1h-1zM285 819h1v1h-1zM393 817h1v1h-1zM286 813h1v1h-1zM424 815h1v1h-1zM291 823h1v1h-1zM289 817h1v1h-1zM421 814h1v1h-1zM339 818h1v1h-1zM325 819h1v1h-1zM369 819h1v1h-1zM320 816h1v1h-1zM288 819h1v1h-1zM259 817h1v1h-1zM260 811h1v1h-1zM409 822h1v1h-1zM381 825h1v1h-1zM309 817h1v1h-1zM283 822h1v1h-1zM255 815h1v1h-1zM369 815h1v1h-1zM309 819h1v1h-1zM280 820h1v1h-1zM313 817h1v1h-1zM421 823h1v1h-1zM287 823h1v1h-1zM314 820h1v1h-1zM327 811h1v1h-1zM258 814h1v1h-1zM415 818h1v1h-1zM284 812h1v1h-1zM255 822h1v1h-1zM323 819h1v1h-1zM257 812h1v1h-1zM256 824h1v1h-1zM296 820h1v1h-1zM384 819h1v1h-1zM299 815h1v1h-1zM422 815h1v1h-1zM378 815h1v1h-1zM306 817h1v1h-1zM386 817h1v1h-1zM414 812h1v1h-1zM254 811h1v1h-1zM292 809h1v1h-1zM421 818h1v1h-1zM319 817h1v1h-1zM338 821h1v1h-1zM417 820h1v1h-1zM382 823h1v1h-1zM398 818h1v1h-1zM309 812h1v1h-1zM307 813h1v1h-1zM264 822h1v1h-1zM285 817h1v1h-1zM261 814h1v1h-1zM256 814h1v1h-1zM426 816h1v1h-1zM409 820h1v1h-1zM265 817h1v1h-1zM267 812h1v1h-1zM330 817h1v1h-1zM292 813h1v1h-1zM371 819h1v1h-1zM384 820h1v1h-1zM271 813h1v1h-1zM401 816h1v1h-1zM317 821h1v1h-1zM382 818h1v1h-1zM294 819h1v1h-1zM277 820h1v1h-1zM308 814h1v1h-1zM321 821h1v1h-1zM291 817h1v1h-1zM395 811h1v1h-1zM268 808h1v1h-1zM335 820h1v1h-1zM414 811h1v1h-1zM257 817h1v1h-1zM284 819h1v1h-1zM425 810h1v1h-1zM317 813h1v1h-1zM405 814h1v1h-1zM389 818h1v1h-1zM420 821h1v1h-1zM361 820h1v1h-1zM289 816h1v1h-1zM286 818h1v1h-1zM295 813h1v1h-1zM286 814h1v1h-1zM252 815h1v1h-1zM283 822h1v1h-1zM306 819h1v1h-1zM348 823h1v1h-1zM261 820h1v1h-1zM349 819h1v1h-1zM365 819h1v1h-1zM375 818h1v1h-1zM323 816h1v1h-1zM421 820h1v1h-1zM306 814h1v1h-1zM324 816h1v1h-1zM405 820h1v1h-1zM285 817h1v1h-1zM381 817h1v1h-1zM412 817h1v1h-1zM326 818h1v1h-1zM408 814h1v1h-1zM332 817h1v1h-1zM349 818h1v1h-1zM365 818h1v1h-1zM361 816h1v1h-1zM316 815h1v1h-1zM300 817h1v1h-1zM343 818h1v1h-1zM338 816h1v1h-1zM394 819h1v1h-1zM272 817h1v1h-1zM419 821h1v1h-1zM259 816h1v1h-1zM416 811h1v1h-1zM361 822h1v1h-1zM398 820h1v1h-1zM289 822h1v1h-1zM322 821h1v1h-1zM282 812h1v1h-1zM289 814h1v1h-1zM319 819h1v1h-1zM272 817h1v1h-1zM411 822h1v1h-1zM257 812h1v1h-1zM256 815h1v1h-1zM400 820h1v1h-1zM349 820h1v1h-1zM362 816h1v1h-1zM354 820h1v1h-1zM326 815h1v1h-1zM328 814h1v1h-1zM254 814h1v1h-1zM292 814h1v1h-1zM387 818h1v1h-1zM282 813h1v1h-1zM335 818h1v1h-1zM327 818h1v1h-1zM266 813h1v1h-1zM257 818h1v1h-1zM512 822h1v1h-1zM531 820h1v1h-1zM496 821h1v1h-1zM479 818h1v1h-1zM553 821h1v1h-1zM559 822h1v1h-1zM525 818h1v1h-1zM557 815h1v1h-1zM493 824h1v1h-1zM451 815h1v1h-1zM532 818h1v1h-1zM475 816h1v1h-1zM528 821h1v1h-1zM465 823h1v1h-1zM536 819h1v1h-1zM549 820h1v1h-1zM457 817h1v1h-1zM471 821h1v1h-1zM434 818h1v1h-1zM551 819h1v1h-1zM518 819h1v1h-1zM532 816h1v1h-1zM444 812h1v1h-1zM476 816h1v1h-1zM543 813h1v1h-1zM544 815h1v1h-1zM443 822h1v1h-1zM481 817h1v1h-1zM533 816h1v1h-1zM505 827h1v1h-1zM476 817h1v1h-1zM452 813h1v1h-1zM526 823h1v1h-1zM462 819h1v1h-1zM513 821h1v1h-1zM516 817h1v1h-1zM470 818h1v1h-1zM449 817h1v1h-1zM510 813h1v1h-1zM546 819h1v1h-1zM447 818h1v1h-1zM432 822h1v1h-1zM430 816h1v1h-1zM476 818h1v1h-1zM459 813h1v1h-1zM456 815h1v1h-1zM511 815h1v1h-1zM551 817h1v1h-1zM461 818h1v1h-1zM512 818h1v1h-1zM543 818h1v1h-1zM464 814h1v1h-1zM431 814h1v1h-1zM475 814h1v1h-1zM513 809h1v1h-1zM525 820h1v1h-1zM462 818h1v1h-1zM499 816h1v1h-1zM482 817h1v1h-1zM531 818h1v1h-1zM431 809h1v1h-1zM448 814h1v1h-1zM455 814h1v1h-1zM513 814h1v1h-1zM535 818h1v1h-1zM469 820h1v1h-1zM436 822h1v1h-1zM523 813h1v1h-1zM430 820h1v1h-1zM490 812h1v1h-1zM526 815h1v1h-1zM443 818h1v1h-1zM460 820h1v1h-1zM527 818h1v1h-1zM520 820h1v1h-1zM464 813h1v1h-1zM501 811h1v1h-1zM498 819h1v1h-1zM464 811h1v1h-1zM458 810h1v1h-1zM544 820h1v1h-1zM460 817h1v1h-1zM526 822h1v1h-1zM472 815h1v1h-1zM544 816h1v1h-1zM547 819h1v1h-1zM511 815h1v1h-1zM557 812h1v1h-1zM491 820h1v1h-1zM541 813h1v1h-1zM486 816h1v1h-1zM470 813h1v1h-1zM457 816h1v1h-1zM548 816h1v1h-1zM448 819h1v1h-1zM550 817h1v1h-1zM474 818h1v1h-1zM564 818h1v1h-1zM643 813h1v1h-1zM648 813h1v1h-1zM567 814h1v1h-1zM658 815h1v1h-1zM658 818h1v1h-1zM664 816h1v1h-1zM669 819h1v1h-1zM584 816h1v1h-1zM573 823h1v1h-1zM657 818h1v1h-1zM636 819h1v1h-1zM594 813h1v1h-1zM571 822h1v1h-1zM584 820h1v1h-1zM598 816h1v1h-1zM590 817h1v1h-1zM593 816h1v1h-1zM598 814h1v1h-1zM675 810h1v1h-1zM634 817h1v1h-1zM563 814h1v1h-1zM652 819h1v1h-1zM601 816h1v1h-1zM585 813h1v1h-1zM663 822h1v1h-1zM580 820h1v1h-1zM560 819h1v1h-1zM677 823h1v1h-1zM560 813h1v1h-1zM655 817h1v1h-1zM582 814h1v1h-1zM659 817h1v1h-1zM591 820h1v1h-1zM585 816h1v1h-1zM643 815h1v1h-1zM636 817h1v1h-1zM569 818h1v1h-1zM654 812h1v1h-1zM635 815h1v1h-1zM607 820h1v1h-1zM666 823h1v1h-1zM563 821h1v1h-1zM698 816h1v1h-1zM725 824h1v1h-1zM714 819h1v1h-1zM721 815h1v1h-1zM727 817h1v1h-1zM738 811h1v1h-1zM711 816h1v1h-1zM755 819h1v1h-1zM739 817h1v1h-1zM719 815h1v1h-1zM749 815h1v1h-1zM721 816h1v1h-1zM759 817h1v1h-1zM707 819h1v1h-1zM743 818h1v1h-1zM694 815h1v1h-1zM702 815h1v1h-1zM694 821h1v1h-1zM709 820h1v1h-1zM745 826h1v1h-1zM689 819h1v1h-1zM714 817h1v1h-1zM768 819h1v1h-1zM719 812h1v1h-1zM697 816h1v1h-1zM698 816h1v1h-1zM714 820h1v1h-1zM330 608h1v1h-1zM57 690h1v1h-1zM71 694h1v1h-1zM86 694h1v1h-1zM104 690h1v1h-1zM269 686h1v1h-1zM374 696h1v1h-1zM415 700h1v1h-1zM138 717h1v1h-1zM137 719h1v1h-1zM152 722h1v1h-1zM159 724h1v1h-1zM220 711h1v1h-1zM220 716h1v1h-1zM243 708h1v1h-1zM266 711h1v1h-1zM226 726h1v1h-1zM206 730h1v1h-1zM267 733h1v1h-1zM275 741h1v1h-1zM347 710h1v1h-1zM349 728h1v1h-1zM342 734h1v1h-1zM384 718h1v1h-1zM373 725h1v1h-1zM391 727h1v1h-1zM413 718h1v1h-1zM412 738h1v1h-1zM60 739h1v1h-1zM92 736h1v1h-1zM139 738h1v1h-1zM58 758h1v1h-1zM86 756h1v1h-1zM66 766h1v1h-1zM113 754h1v1h-1zM119 754h1v1h-1zM122 752h1v1h-1zM197 758h1v1h-1zM217 756h1v1h-1zM303 750h1v1h-1zM304 752h1v1h-1zM323 750h1v1h-1zM348 748h1v1h-1zM376 754h1v1h-1zM408 756h1v1h-1zM409 760h1v1h-1zM54 772h1v1h-1zM185 775h1v1h-1zM289 774h1v1h-1zM291 780h1v1h-1zM211 783h1v1h-1zM414 772h1v1h-1zM422 785h1v1h-1zM60 790h1v1h-1zM78 790h1v1h-1zM93 787h1v1h-1zM98 790h1v1h-1zM110 792h1v1h-1zM115 789h1v1h-1zM117 788h1v1h-1zM133 788h1v1h-1zM61 796h1v1h-1zM129 796h1v1h-1zM157 793h1v1h-1zM179 791h1v1h-1zM185 793h1v1h-1zM187 792h1v1h-1zM198 790h1v1h-1zM246 792h1v1h-1zM248 794h1v1h-1zM257 790h1v1h-1zM266 797h1v1h-1zM311 791h1v1h-1zM333 793h1v1h-1zM351 790h1v1h-1zM371 793h1v1h-1zM409 794h1v1h-1zM412 788h1v1h-1zM415 803h1v1h-1zM75 803h1v1h-1zM659 643h1v1h-1zM463 698h1v1h-1zM476 695h1v1h-1zM520 701h1v1h-1zM649 692h1v1h-1zM661 695h1v1h-1zM439 716h1v1h-1zM430 730h1v1h-1zM493 724h1v1h-1zM540 718h1v1h-1zM589 718h1v1h-1zM509 742h1v1h-1zM523 741h1v1h-1zM671 736h1v1h-1zM665 760h1v1h-1zM448 789h1v1h-1zM451 788h1v1h-1zM436 794h1v1h-1zM514 791h1v1h-1zM529 795h1v1h-1zM588 789h1v1h-1zM618 796h1v1h-1zM690 792h1v1h-1zM693 791h1v1h-1zM722 787h1v1h-1zM716 796h1v1h-1zM756 794h1v1h-1zM504 849h1v1h-1zM500 941h1v1h-1zM665 931h1v1h-1z" fill="#e4e411"/>
<polyline points="52.4,249.8 55.0,234.5 59.3,243.8 66.5,224.3 69.9,238.9 74.3,263.7 78.2,263.3 81.4,290.5 85.8,259.1 89.2,260.7 93.1,262.7 96.3,257.1 100.7,267.7 104.3,269.1 108.6,251.4 112.2,254.2 115.6,253.4 122.6,261.7 126.1,263.1 130.3,245.2 134.5,252.8 137.5,293.5 141.5,249.8 145.4,256.2 149.4,252.4 152.8,259.1 157.4,252.2 160.3,253.4 167.3,267.7 171.7,250.8 175.2,256.4 179.2,256.4 182.2,253.8 186.6,265.3 191.2,256.4 196.1,251.8 201.5,249.8 206.1,254.2 209.0,253.8 212.6,265.3 216.6,250.8 221.0,255.4 225.0,252.8 228.3,248.8 231.3,249.8 235.4,270.7 238.6,247.8 242.6,252.8 246.3,249.8 250.5,271.7 253.9,252.8 257.5,252.8 261.8,248.4 265.2,254.8 268.8,270.3 272.4,269.1 276.4,244.8 280.7,273.6 284.3,251.8 287.7,245.8 291.7,242.8 295.6,264.3 298.6,252.8 302.6,260.3 306.6,249.8 309.8,267.7 313.7,249.8 316.9,251.2 321.5,249.8 324.9,254.4 328.4,253.4 332.4,250.8 336.4,267.7 339.4,255.4 343.4,264.7 347.3,253.8 351.3,247.2 354.3,252.2 358.3,253.4 362.2,256.2 366.2,249.8 369.8,255.4 373.2,254.8 377.5,270.7 381.5,249.8 384.5,264.7 388.5,252.8 392.5,240.4 395.6,259.7 399.0,244.8 403.6,237.5 407.4,256.7 410.3,232.5 414.5,251.4 417.9,252.8 421.9,254.8 425.6,263.7 429.5,282.6 433.5,249.8 437.5,251.4 440.5,250.4 444.3,255.4 448.8,252.2 452.8,259.7 455.8,248.8 459.8,250.8 463.3,253.8 466.7,248.8 470.1,261.7 474.1,264.7 478.6,270.3 481.6,253.8 485.2,255.8 489.6,266.3 494.0,252.8 496.9,264.3 500.5,249.8 504.5,250.4 508.5,251.8 511.5,261.7 515.8,281.2 519.4,255.8 523.0,261.3 527.4,252.2 530.7,250.8 534.7,261.3 538.7,265.3 541.7,251.4 545.6,246.8 549.6,255.4 552.8,252.8 556.8,262.3 561.2,256.2 567.1,254.8 572.1,269.7 575.7,257.3 579.6,255.4 583.0,265.3 586.6,251.4 590.6,260.3 594.4,261.3 597.9,253.8 601.3,257.7 605.9,250.8 610.0,256.7 612.4,263.3 620.3,251.4 627.3,266.7 631.3,263.3 635.4,250.8 638.8,256.4 643.8,251.8 646.8,251.4 650.8,256.7 655.7,250.4 661.3,239.9 665.7,235.3 668.6,237.5 672.0,247.8 676.6,264.3 680.6,259.1 684.0,262.7 690.5,245.4 695.5,239.9 698.5,228.5 701.5,227.3 705.4,226.5 710.0,223.9 714.4,227.9 717.4,228.9 721.3,246.4 724.3,221.6 728.3,233.5 731.9,235.9 736.6,253.4 739.6,249.2 743.6,256.2 747.2,252.4 751.6,261.3 754.1,257.3 758.7,268.7 762.1,253.8 766.1,252.2 769.6,274.6 773.4,254.8 777.0,252.2 781.4,253.8 784.9,252.2 788.9,256.4 792.9,252.2 796.3,253.4" fill="none" stroke="#21b9f6" stroke-width="1" shape-rendering="geometricPrecision" stroke-linejoin="miter"/>
</svg>
<div class="ax" style="left:7px;width:40.2px;text-align:right;top:162px">550</div>
<div class="ax" style="left:7px;width:40.2px;text-align:right;top:237px">500</div>
<div class="ax" style="left:7px;width:40.2px;text-align:right;top:312px">450</div>
<div class="ax" style="left:7px;width:40.2px;text-align:right;top:387px">400</div>
<div class="ax" style="left:7px;width:40.2px;text-align:right;top:463px">350</div>
<div class="ax" style="left:7px;width:40.2px;text-align:right;top:538px">300</div>
<div class="ax" style="left:7px;width:40.2px;text-align:right;top:613px">250</div>
<div class="ax" style="left:7px;width:40.2px;text-align:right;top:688px">200</div>
<div class="ax" style="left:7px;width:40.2px;text-align:right;top:764px">150</div>
<div class="ax" style="left:7px;width:40.2px;text-align:right;top:839px">100</div>
<div class="ax" style="left:7px;width:40.2px;text-align:right;top:914px">50</div>
<div class="ax" style="left:801.1px;top:162px">0.55</div>
<div class="ax" style="left:801.1px;top:237px">0.50</div>
<div class="ax" style="left:801.1px;top:312px">0.45</div>
<div class="ax" style="left:801.1px;top:387px">0.40</div>
<div class="ax" style="left:801.1px;top:463px">0.35</div>
<div class="ax" style="left:801.1px;top:538px">0.30</div>
<div class="ax" style="left:801.1px;top:613px">0.25</div>
<div class="ax" style="left:801.1px;top:688px">0.20</div>
<div class="ax" style="left:801.1px;top:764px">0.15</div>
<div class="ax" style="left:801.1px;top:839px">0.10</div>
<div class="ax" style="left:801.1px;top:914px">0.05</div>
<div class="ax" style="left:32.0px;width:41px;text-align:center;top:1001px">0</div>
<div class="ax" style="left:106.4px;width:41px;text-align:center;top:1001px">12</div>
<div class="ax" style="left:180.8px;width:41px;text-align:center;top:1001px">24</div>
<div class="ax" style="left:255.2px;width:41px;text-align:center;top:1001px">36</div>
<div class="ax" style="left:329.6px;width:41px;text-align:center;top:1001px">48</div>
<div class="ax" style="left:404.0px;width:41px;text-align:center;top:1001px">60</div>
<div class="ax" style="left:478.4px;width:41px;text-align:center;top:1001px">72</div>
<div class="ax" style="left:552.8px;width:41px;text-align:center;top:1001px">84</div>
<div class="ax" style="left:627.2px;width:41px;text-align:center;top:1001px">96</div>
<div class="ax" style="left:701.6px;width:41px;text-align:center;top:1001px">108</div>

<div style="left:841px;top:150px;width:73px;height:21px;border:1px solid #3c7fb1;border-radius:3px;background:linear-gradient(#e6eef6 0,#dbe6f0 48%,#c4d6e4 52%,#c0d4e4 100%);box-shadow:inset 0 0 0 1px #48d0f8"></div>
<div class="sep" style="top:181px"></div>
<div class="rb" style="left:837px;top:188px"></div><div style="left:840px;top:191px;width:6px;height:6px;border-radius:50%;background:radial-gradient(circle at 40% 35%,#7ad0f0,#1060a0 70%)"></div>
<div class="rb" style="left:837px;top:204px"></div>
<div class="sep" style="top:220px"></div>
<div class="cb" style="left:837px;top:228px"></div>
<div style="left:837px;top:248px;width:62px;height:20px;border:1px solid #a6a6a6;border-radius:2px;background:#fff"></div>
<div style="left:882px;top:250px;width:15px;height:8px;border:1px solid #d0d0d0;background:#f0f0f0"></div>
<div style="left:882px;top:258px;width:15px;height:8px;border:1px solid #d0d0d0;background:#f0f0f0"></div>
<svg style="left:886px;top:252px" width="7" height="12" viewBox="0 0 7 12"><path d="M.8 3.300L3.500 .8L6.200 3.300 M.8 8.700L3.500 11.200L6.200 8.700" fill="none" stroke="#8a8a8a" stroke-width="1.300"/></svg>
<div class="cb" style="left:837px;top:277px"></div><svg style="left:837px;top:277px" width="13" height="13" viewBox="0 0 13 13"><path d="M3 6.500 L5.300 9.500 L10 2.800" fill="none" stroke="#3a4aa0" stroke-width="1.700"/></svg>
<div class="sep" style="top:292px"></div>
<div class="val" style="top:311px"></div>
<div class="val" style="top:343px"></div>
<div class="val" style="top:374px"></div>
<div class="sep" style="top:396px"></div>
<div class="cb" style="left:837px;top:402px"></div><svg style="left:837px;top:402px" width="13" height="13" viewBox="0 0 13 13"><path d="M3 6.500 L5.300 9.500 L10 2.800" fill="none" stroke="#3a4aa0" stroke-width="1.700"/></svg>
<div class="val" style="top:418px"></div>
<div class="cb" style="left:837px;top:436px"></div><svg style="left:837px;top:436px" width="13" height="13" viewBox="0 0 13 13"><path d="M3 6.500 L5.300 9.500 L10 2.800" fill="none" stroke="#3a4aa0" stroke-width="1.700"/></svg>
<div class="val" style="top:452px"></div>
<div class="val" style="top:485px"></div>

<div style="left:25.0px;top:6px;font-size:12px;line-height:16px;height:16px;white-space:pre;transform-origin:0 0;transform:scaleX(0.995);color:#0a0a14;-webkit-text-stroke:.3px #000;z-index:5">HD Tune Pro 4.60 - Hard Disk Utility (  Registered )</div>
<div style="left:18.3px;top:60px;font-size:12px;line-height:16px;height:16px;white-space:pre;transform-origin:0 0;transform:scaleX(1.025);z-index:5">ATA</div>
<div style="left:54.7px;top:60px;font-size:12px;line-height:16px;height:16px;white-space:pre;transform-origin:0 0;transform:scaleX(0.875);z-index:5">SPCC SSD101</div>
<div style="left:143.6px;top:60px;font-size:12px;line-height:16px;height:16px;white-space:pre;transform-origin:0 0;transform:scaleX(0.904);z-index:5">(120 gB)</div>
<div style="left:645.6px;top:60px;font-size:13px;line-height:17px;height:17px;white-space:pre;transform-origin:0 0;transform:scaleX(0.964);font-weight:bold;z-index:5">24°C</div>
<div style="left:900.7px;top:60px;font-size:12px;line-height:16px;height:16px;white-space:pre;transform-origin:0 0;transform:scaleX(0.824);z-index:5">Exit</div>
<div style="left:45.8px;top:99px;font-size:11px;line-height:14px;height:14px;white-space:pre;transform-origin:0 0;transform:scaleX(0.969);z-index:5">Benchmark</div>
<div style="left:134.5px;top:101px;font-size:11px;line-height:14px;height:14px;white-space:pre;transform-origin:0 0;transform:scaleX(0.986);z-index:5">Info</div>
<div style="left:187.8px;top:101px;font-size:11px;line-height:14px;height:14px;white-space:pre;transform-origin:0 0;transform:scaleX(0.969);z-index:5">Health</div>
<div style="left:253.8px;top:101px;font-size:11px;line-height:14px;height:14px;white-space:pre;transform-origin:0 0;transform:scaleX(0.945);z-index:5">Error Scan</div>
<div style="left:338.8px;top:101px;font-size:11px;line-height:14px;height:14px;white-space:pre;transform-origin:0 0;transform:scaleX(0.954);z-index:5">Folder Usage</div>
<div style="left:436.7px;top:101px;font-size:11px;line-height:14px;height:14px;white-space:pre;transform-origin:0 0;transform:scaleX(0.943);z-index:5">Erase</div>
<div style="left:498.8px;top:101px;font-size:11px;line-height:14px;height:14px;white-space:pre;transform-origin:0 0;transform:scaleX(0.953);z-index:5">File Benchmark</div>
<div style="left:606.8px;top:101px;font-size:11px;line-height:14px;height:14px;white-space:pre;transform-origin:0 0;transform:scaleX(0.955);z-index:5">Disk monitor</div>
<div style="left:699.5px;top:101px;font-size:11px;line-height:14px;height:14px;white-space:pre;transform-origin:0 0;transform:scaleX(0.986);z-index:5">AAM</div>
<div style="left:758.1px;top:101px;font-size:11px;line-height:14px;height:14px;white-space:pre;transform-origin:0 0;transform:scaleX(0.978);z-index:5">Random Access</div>
<div style="left:870.9px;top:101px;font-size:11px;line-height:14px;height:14px;white-space:pre;transform-origin:0 0;transform:scaleX(0.941);z-index:5">Extra tests</div>
<div style="left:865.6px;top:153px;font-size:12px;line-height:16px;height:16px;white-space:pre;transform-origin:0 0;transform:scaleX(0.876);z-index:5">Start</div>
<div style="left:853.0px;top:187px;font-size:11px;line-height:14px;height:14px;white-space:pre;transform-origin:0 0;transform:scaleX(0.970);z-index:5">Read</div>
<div style="left:853.0px;top:203px;font-size:11px;line-height:14px;height:14px;white-space:pre;transform-origin:0 0;transform:scaleX(0.966);z-index:5">Write</div>
<div style="left:852.8px;top:228px;font-size:11px;line-height:14px;height:14px;white-space:pre;transform-origin:0 0;transform:scaleX(0.954);z-index:5">Short stroke</div>
<div style="left:839.6px;top:250px;font-size:12px;line-height:16px;height:16px;white-space:pre;transform-origin:0 0;transform:scaleX(0.928);color:#8c94ac;z-index:5">40</div>
<div style="left:909.3px;top:250px;font-size:12px;line-height:16px;height:16px;white-space:pre;transform-origin:0 0;transform:scaleX(0.906);z-index:5">gB</div>
<div style="left:852.8px;top:277px;font-size:11px;line-height:14px;height:14px;white-space:pre;transform-origin:0 0;transform:scaleX(0.956);z-index:5">Transfer rate</div>
<div style="left:837.2px;top:295px;font-size:11px;line-height:14px;height:14px;white-space:pre;transform-origin:0 0;transform:scaleX(0.910);z-index:5">Minimum</div>
<div style="left:837.2px;top:328px;font-size:11px;line-height:14px;height:14px;white-space:pre;transform-origin:0 0;transform:scaleX(0.912);z-index:5">Maximum</div>
<div style="left:836.7px;top:358px;font-size:11px;line-height:14px;height:14px;white-space:pre;transform-origin:0 0;transform:scaleX(0.973);z-index:5">Average</div>
<div style="left:852.8px;top:402px;font-size:11px;line-height:14px;height:14px;white-space:pre;transform-origin:0 0;transform:scaleX(0.955);z-index:5">Access time</div>
<div style="left:852.8px;top:436px;font-size:11px;line-height:14px;height:14px;white-space:pre;transform-origin:0 0;transform:scaleX(0.948);z-index:5">Burst rate</div>
<div style="left:836.4px;top:469px;font-size:11px;line-height:14px;height:14px;white-space:pre;transform-origin:0 0;transform:scaleX(0.963);z-index:5">CPU usage</div>
<div style="left:849.4px;top:310px;font-size:12px;line-height:16px;height:16px;white-space:pre;transform-origin:0 0;transform:scaleX(1.083);font-weight:bold;color:#1eb4ff;z-index:5">467.5 MB/s</div>
<div style="left:849.4px;top:342px;font-size:12px;line-height:16px;height:16px;white-space:pre;transform-origin:0 0;transform:scaleX(1.083);font-weight:bold;color:#1eb4ff;z-index:5">515.3 MB/s</div>
<div style="left:849.4px;top:373px;font-size:12px;line-height:16px;height:16px;white-space:pre;transform-origin:0 0;transform:scaleX(1.083);font-weight:bold;color:#1eb4ff;z-index:5">493.3 MB/s</div>
<div style="left:858.1px;top:417px;font-size:12px;line-height:16px;height:16px;white-space:pre;transform-origin:0 0;transform:scaleX(1.011);font-weight:bold;color:#ffff20;z-index:5">0.124 ms</div>
<div style="left:849.4px;top:451px;font-size:12px;line-height:16px;height:16px;white-space:pre;transform-origin:0 0;transform:scaleX(1.083);font-weight:bold;color:#fff;z-index:5">342.3 MB/s</div>
<div style="left:869.6px;top:484px;font-size:12px;line-height:16px;height:16px;white-space:pre;transform-origin:0 0;transform:scaleX(1.038);font-weight:bold;color:#fff;z-index:5">3.3%</div>
<div style="left:51.5px;top:155px;font-size:11px;line-height:14px;height:14px;white-space:pre;transform-origin:0 0;transform:scaleX(0.986);z-index:5">MB/s</div>
<div style="left:781.8px;top:155px;font-size:11px;line-height:14px;height:14px;white-space:pre;transform-origin:0 0;transform:scaleX(1.009);z-index:5">ms</div>
<div style="left:54.5px;top:169px;font-size:11px;line-height:14px;height:14px;white-space:pre;transform-origin:0 0;transform:scaleX(0.994);color:#b4b4b4;z-index:5">Registered</div>
<div style="left:780.9px;top:1001px;font-size:11px;line-height:14px;height:14px;white-space:pre;transform-origin:0 0;transform:scaleX(0.943);z-index:5">120gB</div>

<svg style="left:660px;top:955px;z-index:4" width="290" height="83" viewBox="0 0 290 83">
<defs><linearGradient id="wm" x1="0" y1="0" x2="0" y2="1"><stop offset="0" stop-color="#687286" stop-opacity=".62"/><stop offset=".4" stop-color="#6a7494" stop-opacity=".6"/><stop offset=".52" stop-color="#7480d0" stop-opacity=".58"/><stop offset=".6" stop-color="#7884e0" stop-opacity=".58"/><stop offset="1" stop-color="#8c96f0" stop-opacity=".5"/></linearGradient>
<linearGradient id="wt" x1="0" y1="0" x2="0" y2="1"><stop offset="0" stop-color="#aeb9dc"/><stop offset=".7" stop-color="#a3afd4"/><stop offset="1" stop-color="#96a2cc"/></linearGradient></defs>
<g transform="matrix(50.5 12 -15.5 46.5 45.25 45)"><rect x="-.5" y="-.5" width="1" height="1" rx=".14" fill="url(#wm)" stroke="#7a8296" stroke-opacity=".7" stroke-width=".046"/></g>
<path d="M28.500 33.500 L60.500 56" stroke="#fff" stroke-opacity=".58" stroke-width="5.500" stroke-linecap="round"/>
<path d="M56 37 L30 50.500" stroke="#fff" stroke-opacity=".45" stroke-width="4.500" stroke-linecap="round"/>
<text x="78.500" y="57.700" font-family="Liberation Sans, sans-serif" font-size="26.500" fill="url(#wt)" fill-opacity=".88" stroke="#a9b4d6" stroke-opacity=".7" stroke-width=".9" textLength="180.500" lengthAdjust="spacingAndGlyphs">xtremehardware.com</text>
</svg>

</body></html>
